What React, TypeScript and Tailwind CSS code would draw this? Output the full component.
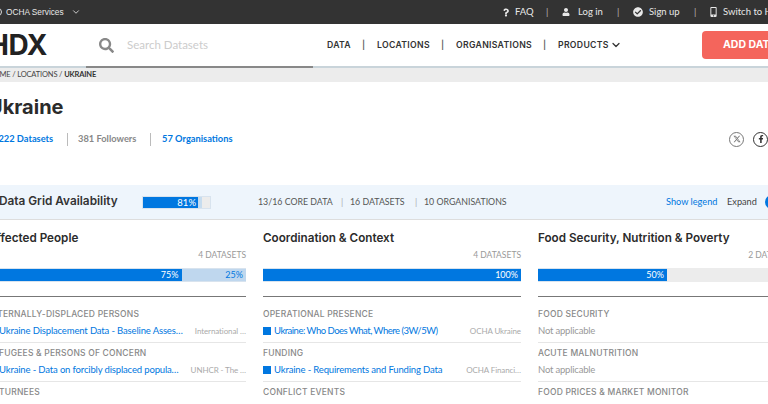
import { ChevronDown } from 'lucide-react';
import { FaCheckCircle, FaFacebookF, FaMobileAlt, FaQuestion, FaSearch, FaUser } from 'react-icons/fa';
import { FaXTwitter } from 'react-icons/fa6';

const body = "font-['Lato','Liberation_Sans',sans-serif]";
const head = "font-['Inter','Liberation_Sans',sans-serif]";

type Row = { label: string; title?: string; org?: string; na?: boolean; tight?: boolean };

const columns: {
  name: string;
  count: string;
  bars: { w: string; text: string; cls: string }[];
  rows: Row[];
}[] = [
  {
    name: 'Affected People',
    count: '4 DATASETS',
    bars: [
      { w: 'w-[75%]', text: '75%', cls: 'bg-[#0077e0] text-white' },
      { w: 'w-[25%]', text: '25%', cls: 'bg-[#bfd7ee] text-[#0077e0]' },
    ],
    rows: [
      { label: 'INTERNALLY-DISPLACED PERSONS', title: 'Ukraine Displacement Data - Baseline Asses…', org: 'International …' },
      { label: 'REFUGEES & PERSONS OF CONCERN', title: 'Ukraine - Data on forcibly displaced popula…', org: 'UNHCR - The …' },
      { label: 'RETURNEES' },
    ],
  },
  {
    name: 'Coordination & Context',
    count: '4 DATASETS',
    bars: [{ w: 'w-full', text: '100%', cls: 'bg-[#0077e0] text-white' }],
    rows: [
      { label: 'OPERATIONAL PRESENCE', title: 'Ukraine: Who Does What, Where (3W/5W)', org: 'OCHA Ukraine', tight: true },
      { label: 'FUNDING', title: 'Ukraine - Requirements and Funding Data', org: 'OCHA Financi…' },
      { label: 'CONFLICT EVENTS' },
    ],
  },
  {
    name: 'Food Security, Nutrition & Poverty',
    count: '2 DATASETS',
    bars: [{ w: 'w-1/2', text: '50%', cls: 'bg-[#0077e0] text-white' }],
    rows: [
      { label: 'FOOD SECURITY', na: true },
      { label: 'ACUTE MALNUTRITION', na: true },
      { label: 'FOOD PRICES & MARKET MONITOR' },
    ],
  },
];

function Column({ col }: { col: (typeof columns)[number] }) {
  return (
    <div className="w-[258px] shrink-0">
      <h3 className={`${head} h-[20px] text-[11.7px] leading-[20px] font-semibold text-[#2b2b2b] whitespace-nowrap`}>{col.name}</h3>
      <div className={`${body} h-[14px] text-right text-[8.5px] leading-[14px] text-[#999]`}>{col.count}</div>
      <div className="mt-[6px] flex h-[14px] bg-[#ececec]">
        {col.bars.map((b) => (
          <div key={b.text} className={`${b.w} ${b.cls} ${body} border-y border-[#d8e3ee] pr-[3px] text-right text-[9px] leading-[12px]`}>
            {b.text}
          </div>
        ))}
      </div>
      <div className="mt-[14px] border-t border-[#777]" />
      <div className="mt-[10px]">
        {col.rows.map((r, i) => (
          <div key={r.label} className={i < 2 ? 'mb-[3px] h-[36px] border-b border-[#e6e6e6]' : ''}>
            <div className={`${head} h-[14px] text-[8.5px] leading-[14px] font-medium tracking-[0.2px] text-[#888] whitespace-nowrap`}>{r.label}</div>
            {r.na && <div className={`${body} mt-[3px] text-[9.5px] leading-[14px] tracking-[-0.2px] text-[#999]`}>Not applicable</div>}
            {r.title && (
              <div className="mt-[3px] flex items-center justify-between whitespace-nowrap">
                <div className="flex items-center gap-[3px]">
                  <span className="h-[8px] w-[8px] shrink-0 bg-[#0077e0]" />
                  <span className={`${body} text-[9.5px] leading-[14px] text-[#0077e0] ${r.tight ? 'tracking-[-0.5px]' : 'tracking-[-0.15px]'}`}>{r.title}</span>
                </div>
                <span className={`${body} text-[8px] leading-[14px] tracking-[-0.1px] text-[#aaa]`}>{r.org}</span>
              </div>
            )}
          </div>
        ))}
      </div>
    </div>
  );
}

export default function App() {
  return (
    <div className="h-[404px] w-[768px] overflow-hidden bg-white">
      {/* top bar */}
      <div className="flex h-[24px] items-center bg-[#333] whitespace-nowrap text-[#e8e8e8]">
        <div className="ml-[-6px] flex w-[509px] shrink-0 items-center">
          <span className="mr-[4px] h-[8px] w-[8px] shrink-0 rounded-full border border-[#ddd]" />
          <span className="font-['Liberation_Sans',sans-serif] text-[8.3px]">OCHA Services</span>
          <ChevronDown className="ml-[7px] h-[10px] w-[10px]" />
        </div>
        <div className={`${body} flex shrink-0 items-center text-[9.5px]`}>
          <FaQuestion className="h-[9px] w-[6px] shrink-0" />
          <span className="ml-[6px] w-[25px]">FAQ</span>
          <span className="ml-[6px] w-[16px] text-[#bbb]">|</span>
          <FaUser className="h-[8px] w-[8px] shrink-0" />
          <span className="ml-[8px] w-[30px]">Log in</span>
          <span className="ml-[9px] w-[16px] text-[#bbb]">|</span>
          <FaCheckCircle className="h-[10px] w-[10px] shrink-0" />
          <span className="ml-[6px] w-[36px]">Sign up</span>
          <span className="ml-[9px] w-[16px] text-[#bbb]">|</span>
          <FaMobileAlt className="h-[10px] w-[7px] shrink-0" />
          <span className="ml-[6px]">Switch to HXL</span>
        </div>
      </div>

      {/* main nav */}
      <div className="flex h-[42px] items-center whitespace-nowrap">
        <span className={`${head} ml-[-12px] w-[111px] shrink-0 text-[28px] font-bold tracking-[-0.5px] text-[#222]`}>HDX</span>
        <FaSearch className="h-[15px] w-[15px] shrink-0 text-[#888]" />
        <span className={`${body} ml-[13px] w-[200px] shrink-0 text-[11.5px] text-[#ccc]`}>Search Datasets</span>
        <div className={`${head} flex w-[375px] shrink-0 items-center pt-[1px] text-[8.7px] font-semibold tracking-[0.3px] text-[#333]`}>
          <span className="w-[35px]">DATA</span>
          <span className="w-[15px] text-[#666]">|</span>
          <span className="w-[64px]">LOCATIONS</span>
          <span className="w-[15px] text-[#666]">|</span>
          <span className="w-[87px]">ORGANISATIONS</span>
          <span className="w-[15px] text-[#666]">|</span>
          <span className="w-[52px]">PRODUCTS</span>
          <ChevronDown className="h-[12px] w-[12px]" strokeWidth={2.5} />
        </div>
        <div className={`${head} flex h-[28px] w-[90px] shrink-0 items-center rounded-[4px] bg-[#f4655c] pl-[21px] text-[10.5px] font-bold text-white`}>
          ADD DATA
        </div>
      </div>

      <div className="flex h-[2px] bg-[#c9d4da]">
        <div className="ml-[86px] h-full w-[227px] bg-[#888]" />
      </div>

      {/* breadcrumb */}
      <div className={`${body} h-[14px] bg-[#ececec] text-[7.5px] leading-[14px] tracking-[-0.15px] whitespace-nowrap text-[#444]`}>
        <div className="ml-[-12px]">
          HOME / LOCATIONS / <b className="text-[#333]">UKRAINE</b>
        </div>
      </div>

      {/* title */}
      <h1 className={`${head} mt-[13px] ml-[-12px] text-[20px] leading-[24px] font-bold text-[#2b2b2b]`}>Ukraine</h1>

      <div className={`${body} mt-[10px] flex h-[20px] items-center whitespace-nowrap text-[9.3px] font-bold`}>
        <span className="ml-[-7px] w-[60px] shrink-0 text-[#0077e0]">1222 Datasets</span>
        <span className="ml-[14px] h-[13px] shrink-0 border-l border-[#bbb]" />
        <span className="ml-[10px] w-[60px] shrink-0 text-[#888]">381 Followers</span>
        <span className="ml-[12px] h-[13px] shrink-0 border-l border-[#bbb]" />
        <span className="ml-[11px] shrink-0 text-[#0077e0]">57 Organisations</span>
        <div className="ml-auto flex shrink-0 items-center gap-[9px]">
          <span className="flex h-[15px] w-[15px] items-center justify-center rounded-full border border-[#777] text-[#777]">
            <FaXTwitter className="h-[8px] w-[8px]" />
          </span>
          <span className="flex h-[15px] w-[15px] items-center justify-center rounded-full border border-[#333] text-[#333]">
            <FaFacebookF className="h-[8px] w-[8px]" />
          </span>
        </div>
      </div>

      {/* grid bar */}
      <div className="mt-[36px] flex h-[35px] items-center border-b border-[#ddd] bg-[#eef5fc] whitespace-nowrap">
        <span className={`${head} ml-[-1px] w-[143px] shrink-0 text-[11.8px] font-semibold text-[#333]`}>Data Grid Availability</span>
        <div className="flex h-[13px] w-[69px] shrink-0 border border-[#d8e3ee] bg-[#ececec]">
          <div className={`${body} w-[55px] bg-[#0077e0] pr-[2px] text-right text-[9.5px] leading-[11px] text-white`}>81%</div>
          <div className="w-[4px] bg-[#c6dcef]" />
        </div>
        <div className={`${body} ml-[47px] flex w-[249px] shrink-0 items-center text-[8.8px] text-[#555]`}>
          <span className="w-[83px]">13/16 CORE DATA</span>
          <span className="w-[9px] text-[#aaa]">|</span>
          <span className="w-[65px]">16 DATASETS</span>
          <span className="w-[9px] text-[#aaa]">|</span>
          <span>10 ORGANISATIONS</span>
        </div>
        <span className={`${body} ml-[159px] w-[61px] shrink-0 text-[9.2px] text-[#0077e0]`}>Show legend</span>
        <span className={`${body} w-[38px] shrink-0 text-[9.2px] text-[#444]`}>Expand</span>
        <span className="h-[14px] w-[14px] shrink-0 rounded-full bg-[#0077e0]" />
      </div>

      {/* columns */}
      <div className="mt-[8px] ml-[-12px] flex gap-[17px]">
        {columns.map((c) => (
          <Column key={c.name} col={c} />
        ))}
      </div>
    </div>
  );
}
